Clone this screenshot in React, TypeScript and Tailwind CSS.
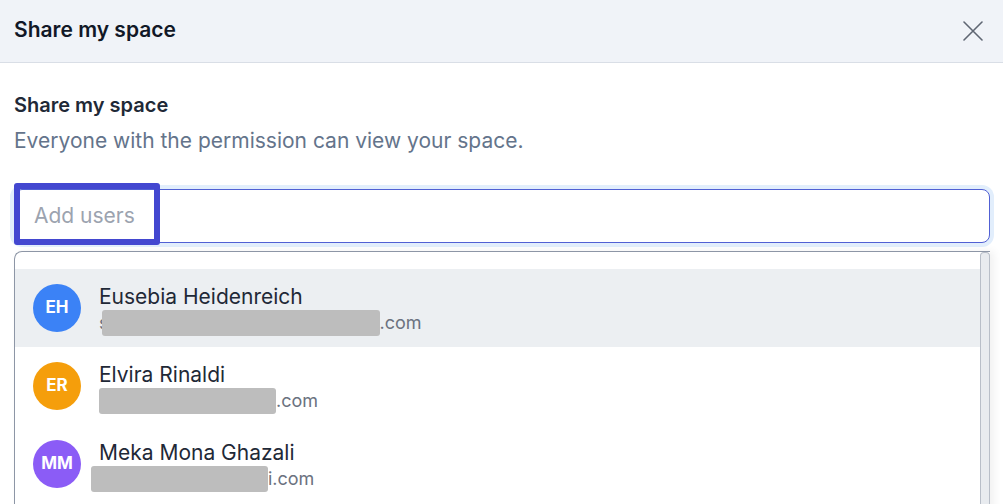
import * as React from "react";

const USERS = [
  { initials: "EH", name: "Eusebia Heidenreich", color: "bg-[#3b82f6]", boxW: "w-[278px]", lead: "s", tail: ".com", active: true },
  { initials: "ER", name: "Elvira Rinaldi", color: "bg-[#f59e0b]", boxW: "w-[177px]", lead: "", tail: ".com", active: false },
  { initials: "MM", name: "Meka Mona Ghazali", color: "bg-[#8b5cf6]", boxW: "w-[177px]", lead: "", tail: "i.com", active: false, shift: true },
];

export default function App() {
  return (
    <div className="h-[504px] w-[1003px] overflow-hidden bg-white" style={{ fontFamily: "Inter, 'Noto Sans', sans-serif" }}>
      <div className="flex h-[63px] items-center justify-between border-b border-[#d9dee6] bg-[#f0f3f8] pb-[3px] pl-[14px] pr-[20px]">
        <h2 className="text-[21px] font-semibold text-[#111827]">Share my space</h2>
        <svg width="20" height="20" viewBox="0 0 20 20" className="mt-[3px] text-[#5f6673]">
          <path d="M1 1 L19 19 M19 1 L1 19" stroke="currentColor" strokeWidth="1.6" strokeLinecap="round" />
        </svg>
      </div>

      <div className="pl-[14px] pr-[13px] pt-[27px]">
        <div className="text-[20px] font-semibold leading-[30px] text-[#1f2937]">Share my space</div>
        <div className="mt-[6px] text-[21px] leading-[30px] text-[#64748b]">Everyone with the permission can view your space.</div>

        <div className="relative mt-[33px]">
          <div className="flex h-[54px] items-center rounded-[8px] border border-[#5160d4] bg-white pl-[19px] shadow-[0_0_0_4px_#e2eefc]">
            <span className="text-[21px] text-[#9ca3af]">Add users</span>
          </div>
          <div className="absolute left-0 top-[-6px] h-[62px] w-[146px] rounded-[3px] border-[6px] border-[#4347d0]" />
        </div>

        <div className="relative mt-[8px] h-[300px] rounded-tl-[8px] border-l border-t border-[#8d96a6] pr-[10px] pt-[17px] shadow-[4px_0_8px_rgba(0,0,0,0.06)]">
          {USERS.map((u) => (
            <div key={u.initials} className={`flex h-[78px] items-center gap-[18px] pl-[18px] ${u.active ? "bg-[#eceff2]" : ""}`}>
              <div className={`flex h-[48px] w-[48px] shrink-0 items-center justify-center rounded-full ${u.color} text-[17px] font-bold text-white`}>
                {u.initials}
              </div>
              <div className="flex flex-col pt-[4px]">
                <span className="text-[21px] leading-[26px] text-[#1f2937]">{u.name}</span>
                <span className={`flex items-center text-[18px] leading-[26px] text-[#6b7280] ${u.shift ? "-ml-[8px]" : ""}`}>
                  {u.lead && <span>{u.lead}</span>}
                  <span className={`inline-block h-[26px] ${u.boxW} rounded-[3px] bg-[#bdbdbd] ${u.lead ? "-ml-[7px]" : ""}`} />
                  <span>{u.tail}</span>
                </span>
              </div>
            </div>
          ))}
          <div className="absolute right-0 top-0 h-full w-[10px] rounded-t-[4px] border-x border-t border-[#b8bec8] bg-[#e8ebef]" />
        </div>
      </div>
    </div>
  );
}
